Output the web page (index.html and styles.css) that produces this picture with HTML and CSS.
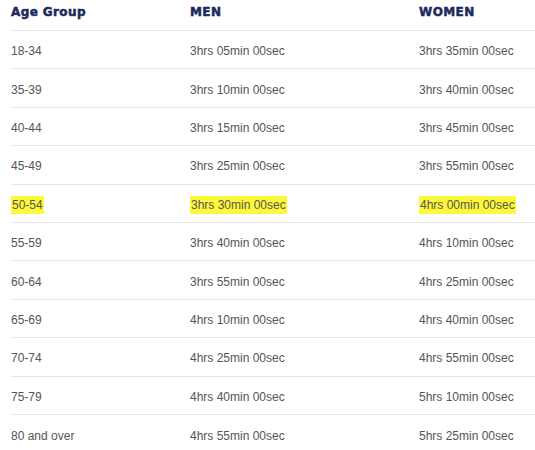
FILE: index.html
```html
<!DOCTYPE html>
<html>
<head>
<meta charset="utf-8">
<link rel="stylesheet" href="styles.css">
</head>
<body>
<div class="table">
  <div class="row head"><div>Age Group</div><div>MEN</div><div>WOMEN</div></div>
  <div class="row"><div>18-34</div><div>3hrs 05min 00sec</div><div>3hrs 35min 00sec</div></div>
  <div class="row"><div>35-39</div><div>3hrs 10min 00sec</div><div>3hrs 40min 00sec</div></div>
  <div class="row"><div>40-44</div><div>3hrs 15min 00sec</div><div>3hrs 45min 00sec</div></div>
  <div class="row"><div>45-49</div><div>3hrs 25min 00sec</div><div>3hrs 55min 00sec</div></div>
  <div class="row"><div><span class="hl">50-54</span></div><div><span class="hl">3hrs 30min 00sec</span></div><div><span class="hl">4hrs 00min 00sec</span></div></div>
  <div class="row"><div>55-59</div><div>3hrs 40min 00sec</div><div>4hrs 10min 00sec</div></div>
  <div class="row"><div>60-64</div><div>3hrs 55min 00sec</div><div>4hrs 25min 00sec</div></div>
  <div class="row"><div>65-69</div><div>4hrs 10min 00sec</div><div>4hrs 40min 00sec</div></div>
  <div class="row"><div>70-74</div><div>4hrs 25min 00sec</div><div>4hrs 55min 00sec</div></div>
  <div class="row"><div>75-79</div><div>4hrs 40min 00sec</div><div>5hrs 10min 00sec</div></div>
  <div class="row last"><div>80 and over</div><div>4hrs 55min 00sec</div><div>5hrs 25min 00sec</div></div>
</div>
</body>
</html>
```
FILE: styles.css
```css
html, body {
  margin: 0;
  padding: 0;
  background: #ffffff;
}
.table {
  margin-left: 11px;
  font-family: "Liberation Sans", Arial, sans-serif;
  font-size: 12px;
  color: #555555;
}
.row {
  display: grid;
  grid-template-columns: 179px 229px 1fr;
  align-items: center;
  height: 38.4px;
  padding-top: 3px;
  box-sizing: border-box;
  border-bottom: 1.5px solid #e6e6e6;
}
.row.head {
  height: 31px;
  align-items: start;
  padding-top: 5px;
  font-family: "DejaVu Sans", sans-serif;
  font-weight: 700;
  font-size: 12px;
  color: #1c2a5e;
  letter-spacing: 0.4px;
  -webkit-text-stroke: 0.5px #1c2a5e;
}
.row.last {
  border-bottom: none;
}
.hl {
  background: #fdf83a;
  padding: 2px 1px;
}
```
